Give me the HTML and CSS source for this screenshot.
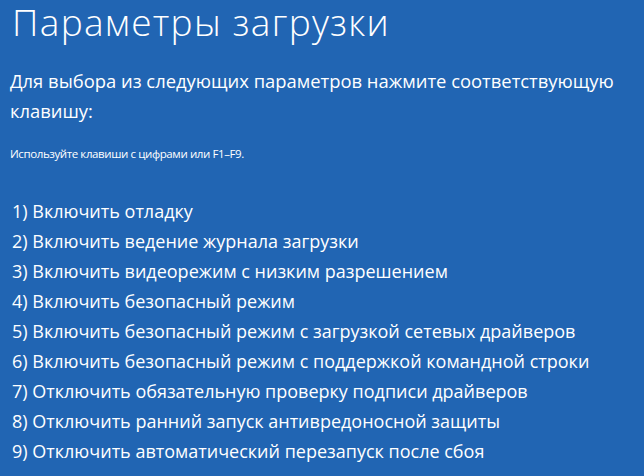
FILE: index.html
```html
<!DOCTYPE html>
<html lang="ru">
    <head>
        <meta charset="UTF-8">
        <link rel="stylesheet" href="styles.css">
        <title>Параметры загрузки</title>
    </head>
    <body>
        <div class="screen">
            <h1 class="screen-title">Параметры загрузки</h1>
            <p class="screen-lead">Для выбора из следующих параметров нажмите соответствующую клавишу:</p>
            <p class="screen-hint">Используйте клавиши с цифрами или F1–F9.</p>

            <ol class="options">
                <li>1) Включить отладку</li>
                <li>2) Включить ведение журнала загрузки</li>
                <li>3) Включить видеорежим с низким разрешением</li>
                <li>4) Включить безопасный режим</li>
                <li>5) Включить безопасный режим с загрузкой сетевых драйверов</li>
                <li>6) Включить безопасный режим с поддержкой командной строки</li>
                <li>7) Отключить обязательную проверку подписи драйверов</li>
                <li>8) Отключить ранний запуск антивредоносной защиты</li>
                <li>9) Отключить автоматический перезапуск после сбоя</li>
            </ol>
        </div>
    </body>
</html>
```

FILE: styles.css
```css
* { box-sizing: border-box; }

html, body { margin: 0; height: 100%; }

body {
    background-color: #2165b3;
    color: #fff;
    font-family: "Open Sans", "Noto Sans", sans-serif;
}

.screen { padding: 0 10px; }

.screen-title {
    margin: 0; padding-left: 2px;
    font-size: 37px; font-weight: 300; line-height: 44px;
    letter-spacing: 1.3px;
}

.screen-lead {
    margin: 22px 0 0; max-width: 624px;
    font-size: 18.4px; font-weight: 400; line-height: 30px;
}

.screen-hint {
    margin: 18px 0 0;
    font-size: 11.5px; line-height: 20px; letter-spacing: -0.4px;
}

.options {
    list-style: none; margin: 32px 0 0; padding: 0 0 0 2px;
    font-size: 18px; line-height: 30px;
}
```
